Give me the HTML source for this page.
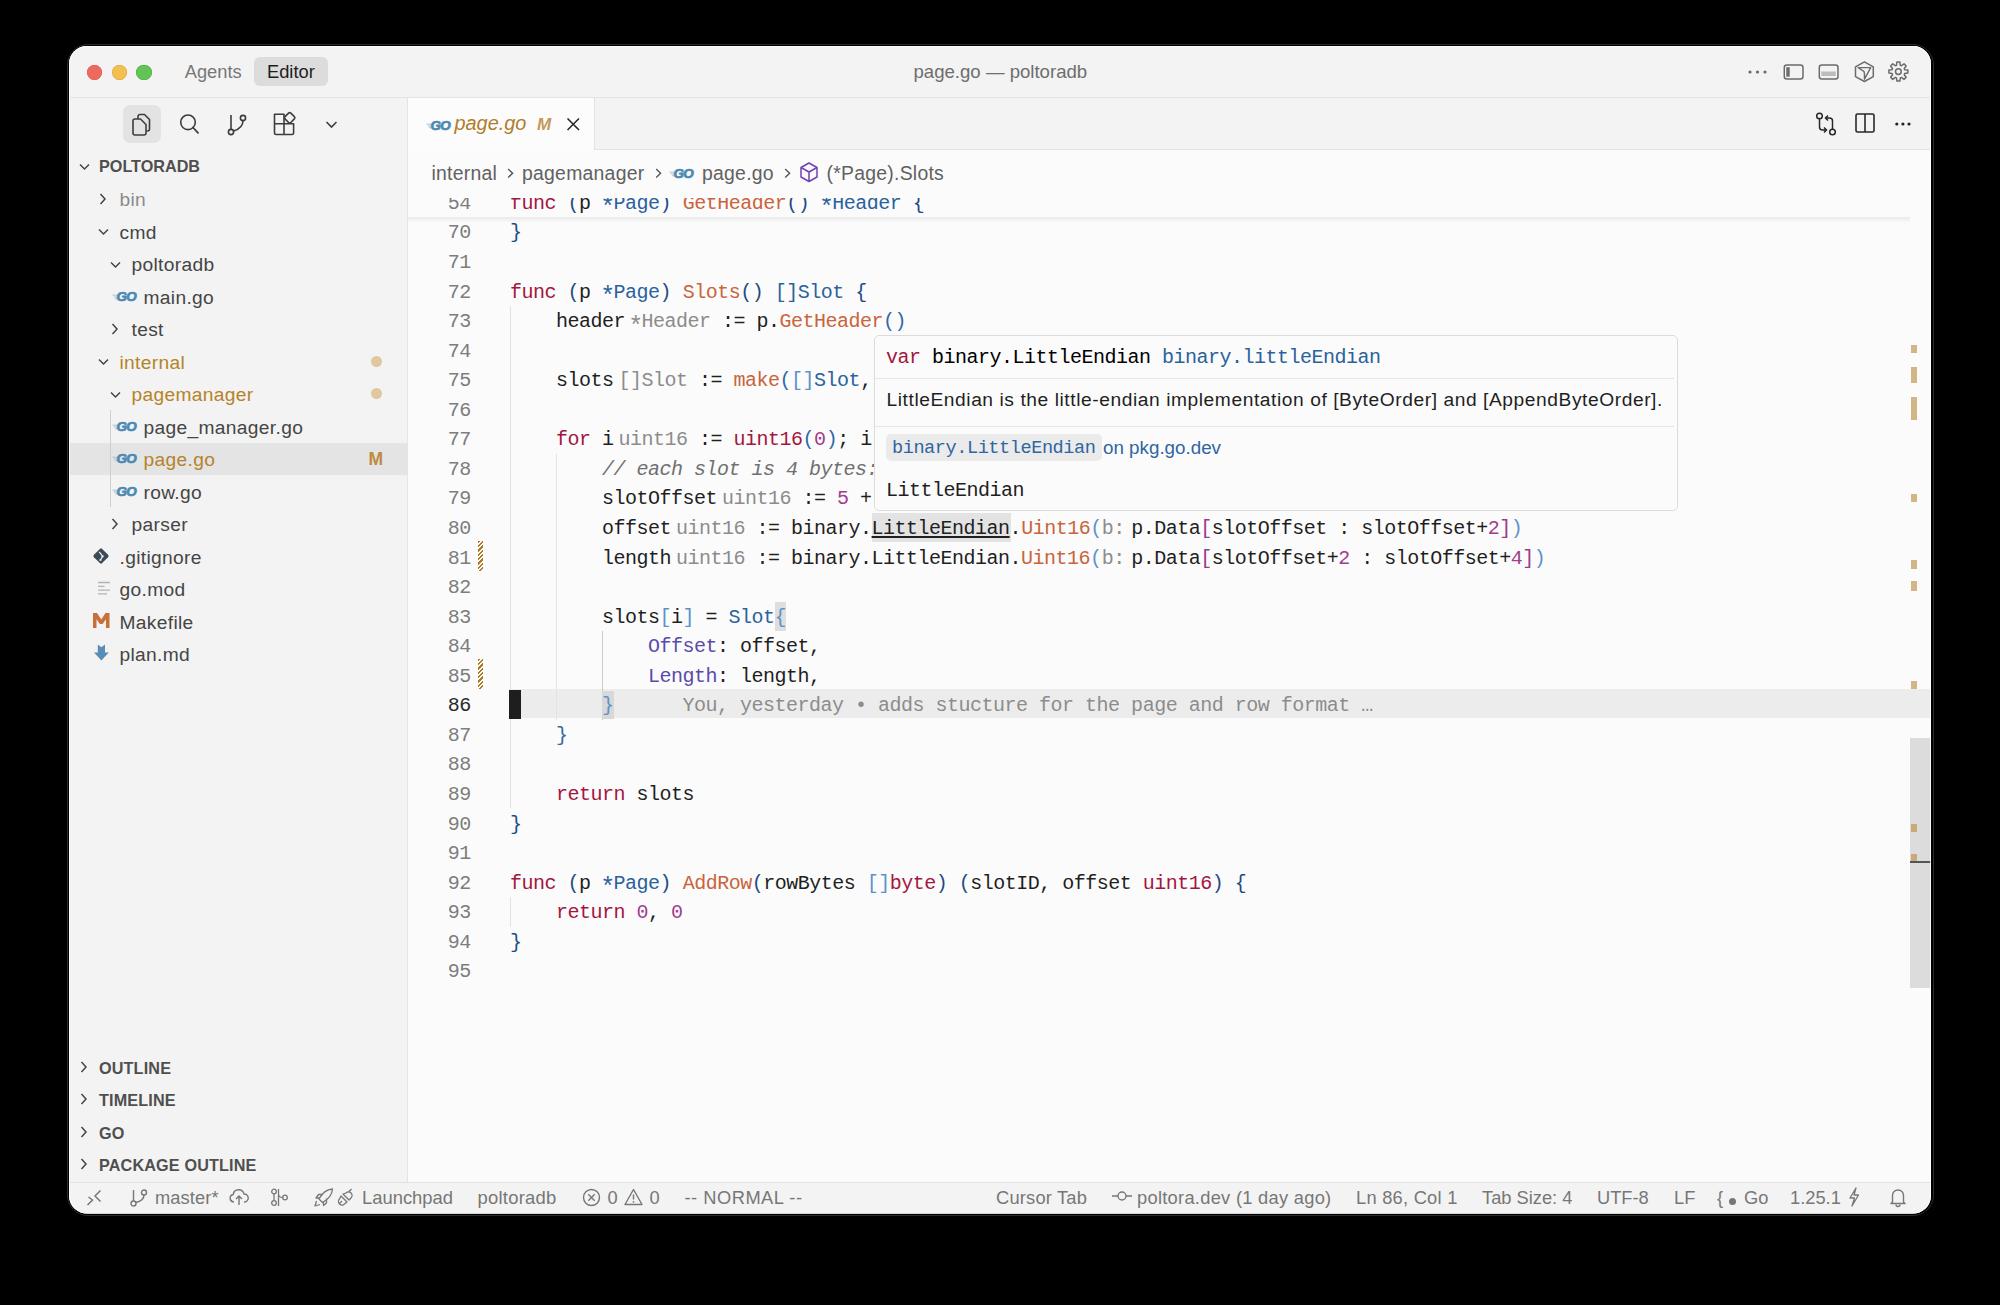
<!DOCTYPE html><html><head><meta charset="utf-8"><style>
*{margin:0;padding:0;box-sizing:border-box}
html,body{width:2000px;height:1305px;background:#000;overflow:hidden}
body{font-family:"Liberation Sans",sans-serif;position:relative}
#win{position:absolute;left:0;top:0;width:2000px;height:1305px;clip-path:inset(46px 69px 91.5px 69px round 18px);background:#f3f3f3}
.b{position:absolute}
.t{position:absolute;white-space:pre;line-height:1}
.m{font-family:"Liberation Mono",monospace}
svg{position:absolute;overflow:visible}
.code{position:absolute;white-space:pre;line-height:1;font-family:"Liberation Mono",monospace;font-size:20px;letter-spacing:-0.5px}
.code span{display:inline-block}
</style></head><body><div class="b" style="left:66.5px;top:44px;width:1867px;height:1172px;border:1px solid #2c2c2c;border-radius:21px"></div><div id="win"><div class="b" style="left:69px;top:46px;width:1862px;height:51px;background:#f3f3f3"></div><div class="b" style="left:69px;top:97px;width:1862px;height:1px;background:#e4e4e4"></div><div class="b" style="left:69px;top:98px;width:338px;height:1084px;background:#f3f3f3"></div><div class="b" style="left:407px;top:98px;width:1px;height:1084px;background:#e4e4e4"></div><div class="b" style="left:408px;top:98px;width:1523px;height:1084px;background:#fbfbfb"></div><div class="b" style="left:408px;top:98px;width:1523px;height:51px;background:#f3f3f3"></div><div class="b" style="left:408px;top:149px;width:1523px;height:1px;background:#e4e4e4"></div><div class="b" style="left:408px;top:98px;width:186px;height:52px;background:#fcfcfc"></div><div class="b" style="left:594px;top:98px;width:1px;height:51px;background:#e4e4e4"></div><div class="b" style="left:69px;top:1182px;width:1862px;height:1px;background:#e2e2e2"></div><div class="b" style="left:69px;top:1183px;width:1862px;height:31px;background:#f3f3f3"></div><div class="b" style="left:87.2px;top:64.9px;width:15.2px;height:15.2px;border-radius:50%;background:#ee6a5f;box-shadow:inset 0 0 0 0.5px #d65a50"></div><div class="b" style="left:111.7px;top:64.9px;width:15.2px;height:15.2px;border-radius:50%;background:#f5bf4f;box-shadow:inset 0 0 0 0.5px #d9a53c"></div><div class="b" style="left:136.4px;top:64.9px;width:15.2px;height:15.2px;border-radius:50%;background:#61c454;box-shadow:inset 0 0 0 0.5px #4fa842"></div><div class="t" style="left:184.70px;top:62.74px;font-size:18.3px;color:#777777;">Agents</div><div class="b" style="left:254px;top:57px;width:74px;height:29px;background:#dcdcdc;border-radius:6px"></div><div class="t" style="left:267.00px;top:62.74px;font-size:18.3px;color:#1e1e1e;">Editor</div><div class="t" style="left:913.50px;top:62.69px;font-size:18.6px;color:#6e6e6e;">page.go — poltoradb</div><svg style="left:1748px;top:68px;" width="22" height="8" viewBox="0 0 22 8"><circle cx="2.0" cy="4" r="1.6" fill="#6b6b6b"/><circle cx="9.5" cy="4" r="1.6" fill="#6b6b6b"/><circle cx="17.0" cy="4" r="1.6" fill="#6b6b6b"/></svg><svg style="left:1783px;top:63px;" width="22" height="18" viewBox="0 0 22 18"><rect x="1.3" y="2" width="18.7" height="14" rx="2.5" fill="none" stroke="#6b6b6b" stroke-width="1.5"/><rect x="3.3" y="4.2" width="3.4" height="9.5" fill="#6b6b6b"/></svg><svg style="left:1818px;top:63px;" width="22" height="18" viewBox="0 0 22 18"><rect x="1.3" y="2" width="18.7" height="14" rx="2.5" fill="none" stroke="#6b6b6b" stroke-width="1.5"/><rect x="3.3" y="8.5" width="14.5" height="4.5" fill="#bcbcbc"/></svg><svg style="left:1853px;top:61px;" width="22" height="22" viewBox="0 0 22 22"><path d="M11.4 0.8 L20.3 5.8 L20.3 15.6 L11.4 20.5 L2.5 15.6 L2.5 5.8 Z" fill="none" stroke="#6b6b6b" stroke-width="1.5" stroke-linejoin="round"/><path d="M5.2 6.6 L17.7 6.6 L11.5 18.2 L11.4 12 Q11.4 10.6 10.2 10 Z" fill="none" stroke="#6b6b6b" stroke-width="1.4" stroke-linejoin="round"/></svg><svg style="left:1888px;top:62px;" width="21" height="21" viewBox="0 0 21 21"><path d="M19.88 8.10 L19.88 11.10 L16.71 11.53 L16.23 12.70 L18.17 15.24 L16.04 17.37 L13.50 15.43 L12.33 15.91 L11.90 19.08 L8.90 19.08 L8.47 15.91 L7.30 15.43 L4.76 17.37 L2.63 15.24 L4.57 12.70 L4.09 11.53 L0.92 11.10 L0.92 8.10 L4.09 7.67 L4.57 6.50 L2.63 3.96 L4.76 1.83 L7.30 3.77 L8.47 3.29 L8.90 0.12 L11.90 0.12 L12.33 3.29 L13.50 3.77 L16.04 1.83 L18.17 3.96 L16.23 6.50 L16.71 7.67Z" fill="none" stroke="#6b6b6b" stroke-width="1.5" stroke-linejoin="round"/><circle cx="10.4" cy="9.6" r="2.9" fill="none" stroke="#6b6b6b" stroke-width="1.5"/></svg><div class="b" style="left:123px;top:105px;width:38px;height:38px;background:#e3e3e3;border-radius:7px"></div><svg style="left:131px;top:111px;" width="22" height="26" viewBox="0 0 22 26"><path d="M9 3.5 h4.5 l5 5 v9.5 a2 2 0 0 1 -2 2 h-1" fill="none" stroke="#3d3d3d" stroke-width="1.6" stroke-linejoin="round"/><path d="M9 3.5 a2 2 0 0 0 -2 2 v2.5" fill="none" stroke="#3d3d3d" stroke-width="1.6"/><path d="M4 8 h5.5 l5.5 5.5 v8.5 a2 2 0 0 1 -2 2 h-9 a2 2 0 0 1 -2 -2 v-12 a2 2 0 0 1 2 -2z" fill="none" stroke="#3d3d3d" stroke-width="1.6" stroke-linejoin="round"/></svg><svg style="left:179px;top:114px;" width="22" height="22" viewBox="0 0 22 22"><circle cx="9" cy="8.3" r="7.3" fill="none" stroke="#3d3d3d" stroke-width="1.6"/><path d="M14 13.5 L19 18.8" stroke="#3d3d3d" stroke-width="1.8" stroke-linecap="round"/></svg><svg style="left:226px;top:113px;" width="22" height="23" viewBox="0 0 22 23"><path d="M5 2 V17" stroke="#3d3d3d" stroke-width="1.6"/><circle cx="5" cy="19" r="2.6" fill="none" stroke="#3d3d3d" stroke-width="1.6"/><circle cx="17" cy="5" r="2.6" fill="none" stroke="#3d3d3d" stroke-width="1.6"/><path d="M17 7.6 C17 13 13 16.5 7.6 18" fill="none" stroke="#3d3d3d" stroke-width="1.6"/></svg><svg style="left:273px;top:111px;" width="24" height="25" viewBox="0 0 24 25"><path d="M1.5 3.2 h9.5 v9.6 h9.6 v9.2 a1.5 1.5 0 0 1 -1.5 1.5 h-16.1 a1.5 1.5 0 0 1 -1.5 -1.5 z M11 12.8 v10.7 M1.5 12.8 h9.5" fill="none" stroke="#3d3d3d" stroke-width="1.6" stroke-linejoin="round"/><rect x="12.6" y="2.7" width="8.2" height="8.2" rx="1.6" transform="rotate(45 16.7 6.8)" fill="none" stroke="#3d3d3d" stroke-width="1.6"/></svg><svg style="left:325px;top:120px;" width="14" height="10" viewBox="0 0 14 10"><path d="M1.5 2 L6.5 7 L11.5 2" fill="none" stroke="#3d3d3d" stroke-width="1.6"/></svg><div class="t" style="left:99.00px;top:158.33px;font-size:16.2px;color:#4f4f4f;font-weight:bold">POLTORADB</div><svg style="left:79px;top:163px;" width="12" height="8" viewBox="0 0 12 8"><path d="M1 1.5 L5.5 6 L10 1.5" fill="none" stroke="#444" stroke-width="1.5"/></svg><div class="b" style="left:69px;top:442.5px;width:338px;height:32.5px;background:#e4e4e4"></div><div class="b" style="left:110px;top:410px;width:1px;height:97px;background:#cfcfcf"></div><div class="t" style="left:119.50px;top:190.08px;font-size:19.2px;color:#8a8a8a;letter-spacing:0.33px">bin</div><svg style="left:99.0px;top:192.7px;" width="8" height="13" viewBox="0 0 8 13"><path d="M1.5 1 L6 6 L1.5 11" fill="none" stroke="#444" stroke-width="1.5"/></svg><div class="t" style="left:119.50px;top:222.58px;font-size:19.2px;color:#454545;letter-spacing:0.33px">cmd</div><svg style="left:97.5px;top:228.2px;" width="12" height="8" viewBox="0 0 12 8"><path d="M1 1.5 L5.5 6 L10 1.5" fill="none" stroke="#444" stroke-width="1.5"/></svg><div class="t" style="left:131.50px;top:255.08px;font-size:19.2px;color:#454545;letter-spacing:0.33px">poltoradb</div><svg style="left:109.5px;top:260.7px;" width="12" height="8" viewBox="0 0 12 8"><path d="M1 1.5 L5.5 6 L10 1.5" fill="none" stroke="#444" stroke-width="1.5"/></svg><div class="t" style="left:143.50px;top:287.58px;font-size:19.2px;color:#454545;letter-spacing:0.33px">main.go</div><svg style="left:111.5px;top:290.7px" width="27" height="11" viewBox="0 0 27 11"><path d="M0.5 4.2 h5 M1.8 6.0 h3.6 M3 7.8 h2.2" stroke="#9cc0d6" stroke-width="0.9"/><text x="4.6" y="10.2" font-family="Liberation Sans" font-weight="bold" font-style="italic" font-size="13.5" fill="#4c8ab3" stroke="#4c8ab3" stroke-width="0.7" letter-spacing="-0.9">GO</text></svg><div class="t" style="left:131.50px;top:320.08px;font-size:19.2px;color:#454545;letter-spacing:0.33px">test</div><svg style="left:111.0px;top:322.7px;" width="8" height="13" viewBox="0 0 8 13"><path d="M1.5 1 L6 6 L1.5 11" fill="none" stroke="#444" stroke-width="1.5"/></svg><div class="t" style="left:119.50px;top:352.58px;font-size:19.2px;color:#b5832b;letter-spacing:0.33px">internal</div><svg style="left:97.5px;top:358.2px;" width="12" height="8" viewBox="0 0 12 8"><path d="M1 1.5 L5.5 6 L10 1.5" fill="none" stroke="#444" stroke-width="1.5"/></svg><div class="t" style="left:131.50px;top:385.08px;font-size:19.2px;color:#b5832b;letter-spacing:0.33px">pagemanager</div><svg style="left:109.5px;top:390.7px;" width="12" height="8" viewBox="0 0 12 8"><path d="M1 1.5 L5.5 6 L10 1.5" fill="none" stroke="#444" stroke-width="1.5"/></svg><div class="t" style="left:143.50px;top:417.58px;font-size:19.2px;color:#454545;letter-spacing:0.33px">page_manager.go</div><svg style="left:111.5px;top:420.7px" width="27" height="11" viewBox="0 0 27 11"><path d="M0.5 4.2 h5 M1.8 6.0 h3.6 M3 7.8 h2.2" stroke="#9cc0d6" stroke-width="0.9"/><text x="4.6" y="10.2" font-family="Liberation Sans" font-weight="bold" font-style="italic" font-size="13.5" fill="#4c8ab3" stroke="#4c8ab3" stroke-width="0.7" letter-spacing="-0.9">GO</text></svg><div class="t" style="left:143.50px;top:450.08px;font-size:19.2px;color:#b5832b;letter-spacing:0.33px">page.go</div><svg style="left:111.5px;top:453.2px" width="27" height="11" viewBox="0 0 27 11"><path d="M0.5 4.2 h5 M1.8 6.0 h3.6 M3 7.8 h2.2" stroke="#9cc0d6" stroke-width="0.9"/><text x="4.6" y="10.2" font-family="Liberation Sans" font-weight="bold" font-style="italic" font-size="13.5" fill="#4c8ab3" stroke="#4c8ab3" stroke-width="0.7" letter-spacing="-0.9">GO</text></svg><div class="t" style="left:143.50px;top:482.58px;font-size:19.2px;color:#454545;letter-spacing:0.33px">row.go</div><svg style="left:111.5px;top:485.7px" width="27" height="11" viewBox="0 0 27 11"><path d="M0.5 4.2 h5 M1.8 6.0 h3.6 M3 7.8 h2.2" stroke="#9cc0d6" stroke-width="0.9"/><text x="4.6" y="10.2" font-family="Liberation Sans" font-weight="bold" font-style="italic" font-size="13.5" fill="#4c8ab3" stroke="#4c8ab3" stroke-width="0.7" letter-spacing="-0.9">GO</text></svg><div class="t" style="left:131.50px;top:515.08px;font-size:19.2px;color:#454545;letter-spacing:0.33px">parser</div><svg style="left:111.0px;top:517.7px;" width="8" height="13" viewBox="0 0 8 13"><path d="M1.5 1 L6 6 L1.5 11" fill="none" stroke="#444" stroke-width="1.5"/></svg><div class="t" style="left:119.50px;top:547.58px;font-size:19.2px;color:#454545;letter-spacing:0.33px">.gitignore</div><svg style="left:92px;top:547.2px;" width="18" height="18" viewBox="0 0 18 18"><rect x="3.2" y="3.2" width="11.6" height="11.6" rx="1.6" transform="rotate(45 9 9)" fill="#3b4a56"/><path d="M7.2 4.8 L10.6 9.2 M10.6 9.2 L8.6 12.8 M10.6 9.2 V9.2" fill="none" stroke="#f3f3f3" stroke-width="1.2"/><circle cx="10.6" cy="9.4" r="1.1" fill="#f3f3f3"/><circle cx="8.4" cy="13" r="1.1" fill="#f3f3f3"/></svg><div class="t" style="left:119.50px;top:580.08px;font-size:19.2px;color:#454545;letter-spacing:0.33px">go.mod</div><svg style="left:97px;top:581.2px;" width="14" height="14" viewBox="0 0 14 14"><path d="M1 1.5 h12 M1 5.3 h6.5 M1 9.1 h12 M1 12.9 h9" stroke="#b4b4b4" stroke-width="1.3"/></svg><div class="t" style="left:119.50px;top:612.58px;font-size:19.2px;color:#454545;letter-spacing:0.33px">Makefile</div><svg style="left:93px;top:612.7px;" width="17" height="16" viewBox="0 0 17 16"><path d="M0 15 V0 H4 L8.25 6.5 L12.5 0 H16.5 V15 H13 V6.2 L9.6 11 H6.9 L3.5 6.2 V15 Z" fill="#c8703a"/></svg><div class="t" style="left:119.50px;top:645.08px;font-size:19.2px;color:#454545;letter-spacing:0.33px">plan.md</div><svg style="left:93.5px;top:644.2px;" width="16" height="18" viewBox="0 0 16 18"><path d="M3.8 0.5 L7.4 3.2 L11 0.5 V8.5 H14.8 L7.4 16.5 L0 8.5 H3.8 Z" fill="#5a8db5"/></svg><div class="b" style="left:370.5px;top:355.7px;width:11px;height:11px;border-radius:50%;background:#dfc79f"></div><div class="b" style="left:370.5px;top:388.2px;width:11px;height:11px;border-radius:50%;background:#dfc79f"></div><div class="t" style="left:368.50px;top:451.12px;font-size:17.5px;color:#bb8b3e;font-weight:bold">M</div><div class="t" style="left:99.00px;top:1059.53px;font-size:16.2px;color:#4f4f4f;font-weight:bold;letter-spacing:0.15px">OUTLINE</div><svg style="left:80px;top:1060.8px;" width="8" height="13" viewBox="0 0 8 13"><path d="M1.5 1 L6 6 L1.5 11" fill="none" stroke="#444" stroke-width="1.5"/></svg><div class="t" style="left:99.00px;top:1092.03px;font-size:16.2px;color:#4f4f4f;font-weight:bold;letter-spacing:0.15px">TIMELINE</div><svg style="left:80px;top:1093.3px;" width="8" height="13" viewBox="0 0 8 13"><path d="M1.5 1 L6 6 L1.5 11" fill="none" stroke="#444" stroke-width="1.5"/></svg><div class="t" style="left:99.00px;top:1124.53px;font-size:16.2px;color:#4f4f4f;font-weight:bold;letter-spacing:0.15px">GO</div><svg style="left:80px;top:1125.8px;" width="8" height="13" viewBox="0 0 8 13"><path d="M1.5 1 L6 6 L1.5 11" fill="none" stroke="#444" stroke-width="1.5"/></svg><div class="t" style="left:99.00px;top:1157.03px;font-size:16.2px;color:#4f4f4f;font-weight:bold;letter-spacing:0.15px">PACKAGE OUTLINE</div><svg style="left:80px;top:1158.3px;" width="8" height="13" viewBox="0 0 8 13"><path d="M1.5 1 L6 6 L1.5 11" fill="none" stroke="#444" stroke-width="1.5"/></svg><svg style="left:425.5px;top:119.5px" width="27" height="11" viewBox="0 0 27 11"><path d="M0.5 4.2 h5 M1.8 6.0 h3.6 M3 7.8 h2.2" stroke="#9cc0d6" stroke-width="0.9"/><text x="4.6" y="10.2" font-family="Liberation Sans" font-weight="bold" font-style="italic" font-size="13.5" fill="#4c8ab3" stroke="#4c8ab3" stroke-width="0.7" letter-spacing="-0.9">GO</text></svg><div class="t" style="left:454.50px;top:114.09px;font-size:19.9px;color:#b07b2a;font-style:italic">page.go</div><div class="t" style="left:537.00px;top:115.55px;font-size:17px;color:#c49a58;font-style:italic;font-weight:bold">M</div><svg style="left:565.7px;top:117px;" width="15" height="15" viewBox="0 0 15 15"><path d="M1.5 1.5 L13 13 M13 1.5 L1.5 13" stroke="#222" stroke-width="1.5"/></svg><svg style="left:1815px;top:112px;" width="24" height="25" viewBox="0 0 24 25"><circle cx="4.5" cy="4" r="2.8" fill="none" stroke="#282828" stroke-width="1.5"/><circle cx="17.5" cy="20" r="2.8" fill="none" stroke="#282828" stroke-width="1.5"/><path d="M4.5 7 V15 a3 3 0 0 0 3 3 h3.5 M9 15.5 l2.5 2.5 l-2.5 2.5" fill="none" stroke="#282828" stroke-width="1.5"/><path d="M17.5 17 V9 a3 3 0 0 0 -3 -3 h-3.5 M13 3.5 l-2.5 2.5 l2.5 2.5" fill="none" stroke="#282828" stroke-width="1.5"/></svg><svg style="left:1855px;top:113px;" width="20" height="20" viewBox="0 0 20 20"><rect x="1" y="1" width="18" height="18" rx="1.5" fill="none" stroke="#282828" stroke-width="1.6"/><path d="M10 1 V19" stroke="#282828" stroke-width="1.6"/></svg><svg style="left:1894px;top:121px;" width="22" height="6" viewBox="0 0 22 6"><circle cx="2.8" cy="3" r="1.6" fill="#222"/><circle cx="8.899999999999999" cy="3" r="1.6" fill="#222"/><circle cx="15.0" cy="3" r="1.6" fill="#222"/></svg><div class="t" style="left:431.50px;top:164.11px;font-size:19.4px;color:#616161;letter-spacing:0.25px">internal</div><svg style="left:506.5px;top:167.5px;" width="8" height="11" viewBox="0 0 8 11"><path d="M1.2 1 L5.6 5.2 L1.2 9.4" fill="none" stroke="#555" stroke-width="1.4"/></svg><div class="t" style="left:522.00px;top:164.11px;font-size:19.4px;color:#616161;letter-spacing:0.25px">pagemanager</div><svg style="left:654.5px;top:167.5px;" width="8" height="11" viewBox="0 0 8 11"><path d="M1.2 1 L5.6 5.2 L1.2 9.4" fill="none" stroke="#555" stroke-width="1.4"/></svg><svg style="left:669px;top:168px" width="27" height="11" viewBox="0 0 27 11"><path d="M0.5 4.2 h5 M1.8 6.0 h3.6 M3 7.8 h2.2" stroke="#9cc0d6" stroke-width="0.9"/><text x="4.6" y="10.2" font-family="Liberation Sans" font-weight="bold" font-style="italic" font-size="13.5" fill="#4c8ab3" stroke="#4c8ab3" stroke-width="0.7" letter-spacing="-0.9">GO</text></svg><div class="t" style="left:702.00px;top:164.11px;font-size:19.4px;color:#616161;letter-spacing:0.25px">page.go</div><svg style="left:783.5px;top:167.5px;" width="8" height="11" viewBox="0 0 8 11"><path d="M1.2 1 L5.6 5.2 L1.2 9.4" fill="none" stroke="#555" stroke-width="1.4"/></svg><svg style="left:800px;top:162px;" width="18" height="21" viewBox="0 0 18 21"><path d="M9 1 L17 5.5 V15 L9 19.5 L1 15 V5.5 Z M1 5.5 L9 10 L17 5.5 M9 10 V19.5" fill="none" stroke="#7041b5" stroke-width="1.5" stroke-linejoin="round"/></svg><div class="t" style="left:826.50px;top:164.11px;font-size:19.4px;color:#616161;letter-spacing:0.25px">(*Page).Slots</div><div class="b" style="left:509px;top:689.06px;width:1422px;height:29.2px;background:#ececec"></div><div class="b" style="left:510px;top:305.98px;width:1px;height:502.52px;background:#e3e3e3"></div><div class="b" style="left:556px;top:453.78px;width:1px;height:266.03999999999996px;background:#e3e3e3"></div><div class="b" style="left:602px;top:631.14px;width:1px;height:59.12px;background:#cbcbcb"></div><div class="b" style="left:602px;top:690.26px;width:1px;height:29.56px;background:#cbcbcb"></div><div class="b" style="left:510px;top:897.1800000000001px;width:1px;height:29.56px;background:#e3e3e3"></div><div class="b" style="left:774.5px;top:602.0799999999999px;width:11.5px;height:28.5px;background:#dedede"></div><div class="b" style="left:602.0px;top:690.76px;width:11.5px;height:28.5px;background:#d8d8d8"></div><div class="b" style="left:871.8px;top:513.4px;width:139.0px;height:28.5px;background:#e3e3e3"></div><div class="code" style="left:447.7px;top:223.40px;color:#7d7d7d">70</div><div class="code" style="left:510.0px;top:223.40px"><span style="color:#1d4b84;">}</span></div><div class="code" style="left:447.7px;top:252.96px;color:#7d7d7d">71</div><div class="code" style="left:447.7px;top:282.52px;color:#7d7d7d">72</div><div class="code" style="left:510.0px;top:282.52px"><span style="color:#a3173f;">func</span><span style="color:#1f1f1f;"> </span><span style="color:#1d4b84;">(</span><span style="color:#1f1f1f;">p </span><span style="color:#2a629c;position:relative;top:5.5px;left:-1.8px;font-size:25px;letter-spacing:-3.5px;line-height:20px;vertical-align:top">*</span><span style="color:#2a629c;">Page</span><span style="color:#1d4b84;">)</span><span style="color:#1f1f1f;"> </span><span style="color:#c9643c;">Slots</span><span style="color:#1d4b84;">()</span><span style="color:#1f1f1f;"> </span><span style="color:#2a629c;">[]Slot</span><span style="color:#1f1f1f;"> </span><span style="color:#1d4b84;">{</span></div><div class="code" style="left:447.7px;top:312.08px;color:#7d7d7d">73</div><div class="code" style="left:510.0px;top:312.08px"><span style="color:#1f1f1f;">    header</span><span style="color:#8c8c8c;padding-left:5px;position:relative;top:5.5px;left:-1.8px;font-size:25px;letter-spacing:-3.5px;line-height:20px;vertical-align:top">*</span><span style="color:#8c8c8c;">Header</span><span style="color:#1f1f1f;"> := p.</span><span style="color:#c9643c;">GetHeader</span><span style="color:#2e69a3;">()</span></div><div class="code" style="left:447.7px;top:341.64px;color:#7d7d7d">74</div><div class="code" style="left:447.7px;top:371.20px;color:#7d7d7d">75</div><div class="code" style="left:510.0px;top:371.20px"><span style="color:#1f1f1f;">    slots</span><span style="color:#8c8c8c;padding-left:5px;">[]Slot</span><span style="color:#1f1f1f;"> := </span><span style="color:#c9643c;">make</span><span style="color:#2e69a3;">(</span><span style="color:#5b93c9;">[]</span><span style="color:#2a629c;">Slot</span><span style="color:#1f1f1f;">, </span><span style="color:#c9643c;">len</span></div><div class="code" style="left:447.7px;top:400.76px;color:#7d7d7d">76</div><div class="code" style="left:447.7px;top:430.32px;color:#7d7d7d">77</div><div class="code" style="left:510.0px;top:430.32px"><span style="color:#1f1f1f;">    </span><span style="color:#a3173f;">for</span><span style="color:#1f1f1f;"> i</span><span style="color:#8c8c8c;padding-left:5px;">uint16</span><span style="color:#1f1f1f;"> := </span><span style="color:#a3173f;">uint16</span><span style="color:#2e69a3;">(</span><span style="color:#a23d8e;">0</span><span style="color:#2e69a3;">)</span><span style="color:#1f1f1f;">; i &lt; </span></div><div class="code" style="left:447.7px;top:459.88px;color:#7d7d7d">78</div><div class="code" style="left:510.0px;top:459.88px"><span style="color:#1f1f1f;">        </span><span style="color:#707070;font-style:italic;">// each slot is 4 bytes: offset, length</span></div><div class="code" style="left:447.7px;top:489.44px;color:#7d7d7d">79</div><div class="code" style="left:510.0px;top:489.44px"><span style="color:#1f1f1f;">        slotOffset</span><span style="color:#8c8c8c;padding-left:5px;">uint16</span><span style="color:#1f1f1f;"> := </span><span style="color:#a23d8e;">5</span><span style="color:#1f1f1f;"> + i*4</span></div><div class="code" style="left:447.7px;top:519.00px;color:#7d7d7d">80</div><div class="code" style="left:510.0px;top:519.00px"><span style="color:#1f1f1f;">        offset</span><span style="color:#8c8c8c;padding-left:5px;">uint16</span><span style="color:#1f1f1f;"> := binary.</span><span style="color:#1f1f1f;text-decoration:underline;text-underline-offset:1.5px;text-decoration-thickness:1.6px;">LittleEndian</span><span style="color:#1f1f1f;">.</span><span style="color:#c9643c;">Uint16</span><span style="color:#5b93c9;">(</span><span style="color:#8c8c8c;padding-right:6.5px;">b:</span><span style="color:#1f1f1f;">p.Data</span><span style="color:#9a3a8a;">[</span><span style="color:#1f1f1f;">slotOffset : slotOffset+</span><span style="color:#a23d8e;">2</span><span style="color:#9a3a8a;">]</span><span style="color:#5b93c9;">)</span></div><div class="code" style="left:447.7px;top:548.56px;color:#7d7d7d">81</div><div class="code" style="left:510.0px;top:548.56px"><span style="color:#1f1f1f;">        length</span><span style="color:#8c8c8c;padding-left:5px;">uint16</span><span style="color:#1f1f1f;"> := binary.LittleEndian.</span><span style="color:#c9643c;">Uint16</span><span style="color:#5b93c9;">(</span><span style="color:#8c8c8c;padding-right:6.5px;">b:</span><span style="color:#1f1f1f;">p.Data</span><span style="color:#9a3a8a;">[</span><span style="color:#1f1f1f;">slotOffset+</span><span style="color:#a23d8e;">2</span><span style="color:#1f1f1f;"> : slotOffset+</span><span style="color:#a23d8e;">4</span><span style="color:#9a3a8a;">]</span><span style="color:#5b93c9;">)</span></div><div class="code" style="left:447.7px;top:578.12px;color:#7d7d7d">82</div><div class="code" style="left:447.7px;top:607.68px;color:#7d7d7d">83</div><div class="code" style="left:510.0px;top:607.68px"><span style="color:#1f1f1f;">        slots</span><span style="color:#5b93c9;">[</span><span style="color:#1f1f1f;">i</span><span style="color:#5b93c9;">]</span><span style="color:#1f1f1f;"> = </span><span style="color:#2a629c;">Slot</span><span style="color:#5b93c9;">{</span></div><div class="code" style="left:447.7px;top:637.24px;color:#7d7d7d">84</div><div class="code" style="left:510.0px;top:637.24px"><span style="color:#1f1f1f;">            </span><span style="color:#5a4bab;">Offset</span><span style="color:#1f1f1f;">: offset,</span></div><div class="code" style="left:447.7px;top:666.80px;color:#7d7d7d">85</div><div class="code" style="left:510.0px;top:666.80px"><span style="color:#1f1f1f;">            </span><span style="color:#5a4bab;">Length</span><span style="color:#1f1f1f;">: length,</span></div><div class="code" style="left:447.7px;top:696.36px;color:#2a2a2a">86</div><div class="code" style="left:510.0px;top:696.36px"><span style="color:#1f1f1f;">        </span><span style="color:#5b93c9;">}</span><span style="color:#1f1f1f;">      </span><span style="color:#8c8c8c;">You, yesterday • adds stucture for the page and row format …</span></div><div class="code" style="left:447.7px;top:725.92px;color:#7d7d7d">87</div><div class="code" style="left:510.0px;top:725.92px"><span style="color:#1f1f1f;">    </span><span style="color:#2e69a3;">}</span></div><div class="code" style="left:447.7px;top:755.48px;color:#7d7d7d">88</div><div class="code" style="left:447.7px;top:785.04px;color:#7d7d7d">89</div><div class="code" style="left:510.0px;top:785.04px"><span style="color:#1f1f1f;">    </span><span style="color:#a3173f;">return</span><span style="color:#1f1f1f;"> slots</span></div><div class="code" style="left:447.7px;top:814.60px;color:#7d7d7d">90</div><div class="code" style="left:510.0px;top:814.60px"><span style="color:#1d4b84;">}</span></div><div class="code" style="left:447.7px;top:844.16px;color:#7d7d7d">91</div><div class="code" style="left:447.7px;top:873.72px;color:#7d7d7d">92</div><div class="code" style="left:510.0px;top:873.72px"><span style="color:#a3173f;">func</span><span style="color:#1f1f1f;"> </span><span style="color:#1d4b84;">(</span><span style="color:#1f1f1f;">p </span><span style="color:#2a629c;position:relative;top:5.5px;left:-1.8px;font-size:25px;letter-spacing:-3.5px;line-height:20px;vertical-align:top">*</span><span style="color:#2a629c;">Page</span><span style="color:#1d4b84;">)</span><span style="color:#1f1f1f;"> </span><span style="color:#c9643c;">AddRow</span><span style="color:#1d4b84;">(</span><span style="color:#1f1f1f;">rowBytes </span><span style="color:#5b93c9;">[]</span><span style="color:#a3173f;">byte</span><span style="color:#1d4b84;">)</span><span style="color:#1f1f1f;"> </span><span style="color:#1d4b84;">(</span><span style="color:#1f1f1f;">slotID, offset </span><span style="color:#a3173f;">uint16</span><span style="color:#1d4b84;">)</span><span style="color:#1f1f1f;"> </span><span style="color:#1d4b84;">{</span></div><div class="code" style="left:447.7px;top:903.28px;color:#7d7d7d">93</div><div class="code" style="left:510.0px;top:903.28px"><span style="color:#1f1f1f;">    </span><span style="color:#a3173f;">return</span><span style="color:#1f1f1f;"> </span><span style="color:#a23d8e;">0</span><span style="color:#1f1f1f;">, </span><span style="color:#a23d8e;">0</span></div><div class="code" style="left:447.7px;top:932.84px;color:#7d7d7d">94</div><div class="code" style="left:510.0px;top:932.84px"><span style="color:#1d4b84;">}</span></div><div class="code" style="left:447.7px;top:962.40px;color:#7d7d7d">95</div><div class="b" style="left:509px;top:689.76px;width:12px;height:29.2px;background:#1e1e1e"></div><div class="b" style="left:478px;top:541.1600000000001px;width:5px;height:30px;background:repeating-linear-gradient(135deg,#b07a22 0 1.6px,transparent 1.6px 3.1px)"></div><div class="b" style="left:478px;top:659.4000000000001px;width:5px;height:30px;background:repeating-linear-gradient(135deg,#b07a22 0 1.6px,transparent 1.6px 3.1px)"></div><div class="b" style="left:408px;top:198px;width:1502px;height:20px;overflow:hidden;background:#fbfbfb"><div class="code" style="left:102.0px;top:-4.40px"><span style="color:#a3173f">func</span><span style="color:#1f1f1f"> </span><span style="color:#1d4b84">(</span><span style="color:#1f1f1f">p </span><span style="color:#2a629c"><span style="position:relative;top:5.5px;left:-1.8px;font-size:25px;letter-spacing:-3.5px;line-height:20px;vertical-align:top">*</span>Page</span><span style="color:#1d4b84">)</span><span style="color:#1f1f1f"> </span><span style="color:#c9643c">GetHeader</span><span style="color:#1d4b84">()</span><span style="color:#1f1f1f"> </span><span style="color:#2a629c"><span style="position:relative;top:5.5px;left:-1.8px;font-size:25px;letter-spacing:-3.5px;line-height:20px;vertical-align:top">*</span>Header</span><span style="color:#1f1f1f"> </span><span style="color:#1d4b84">{</span></div><div class="code" style="left:39.7px;top:-4.40px;color:#7d7d7d">54</div></div><div class="b" style="left:408px;top:217px;width:1502px;height:6px;background:linear-gradient(rgba(0,0,0,0.07),rgba(0,0,0,0))"></div><div class="b" style="left:1910px;top:738px;width:21px;height:250px;background:#dcdcdc"></div><div class="b" style="left:1911px;top:344.5px;width:6px;height:8.699999999999989px;background:#d3b686"></div><div class="b" style="left:1911px;top:367.2px;width:6px;height:15.600000000000023px;background:#d3b686"></div><div class="b" style="left:1911px;top:397.2px;width:6px;height:22.80000000000001px;background:#d3b686"></div><div class="b" style="left:1911px;top:493.5px;width:6px;height:8.600000000000023px;background:#d3b686"></div><div class="b" style="left:1911px;top:559.7px;width:6px;height:8.899999999999977px;background:#d3b686"></div><div class="b" style="left:1911px;top:581.4px;width:6px;height:9.300000000000068px;background:#d3b686"></div><div class="b" style="left:1911px;top:680.8px;width:6px;height:8.400000000000091px;background:#d3b686"></div><div class="b" style="left:1911px;top:823.6px;width:6px;height:8.399999999999977px;background:#c7aa78"></div><div class="b" style="left:1911px;top:854px;width:6px;height:8px;background:#c7aa78"></div><div class="b" style="left:1910px;top:860.5px;width:21px;height:2px;background:#555"></div><div class="b" style="left:873.5px;top:335px;width:804px;height:176px;background:#fbfbfb;border:1px solid #dcdcdc;border-radius:5px"></div><div class="b" style="left:875px;top:377.5px;width:799px;height:1px;background:#e6e6e6"></div><div class="b" style="left:875px;top:425.5px;width:799px;height:1px;background:#e6e6e6"></div><div class="code" style="left:886px;top:348.10px"><span style="color:#a3173f">var</span> binary.LittleEndian <span style="color:#2a629c">binary.littleEndian</span></div><div class="t" style="left:886.50px;top:389.68px;font-size:19.2px;color:#1f1f1f;letter-spacing:0.57px">LittleEndian is the little-endian implementation of [ByteOrder] and [AppendByteOrder].</div><div class="b" style="left:886px;top:434.3px;width:215.5px;height:27px;background:#ebebeb;border-radius:5px"></div><div class="t m" style="left:892px;top:440.16px;font-size:18.6px;letter-spacing:-0.45px;color:#2f66a0">binary.LittleEndian</div><div class="t" style="left:1103.00px;top:438.52px;font-size:18.8px;color:#2f66a0;">on pkg.go.dev</div><div class="code" style="left:886px;top:481.20px;color:#1f1f1f">LittleEndian</div><svg style="left:86px;top:1189px;" width="16" height="18" viewBox="0 0 16 18"><path d="M1.5 16 L6.5 11 L2.5 8 M14.5 1.5 L9 7 L14.5 12.5" fill="none" stroke="#777777" stroke-width="1.5"/></svg><svg style="left:130px;top:1189px;" width="18" height="18" viewBox="0 0 18 18"><circle cx="3.5" cy="14.5" r="2.5" fill="none" stroke="#777777" stroke-width="1.4"/><circle cx="14" cy="3.5" r="2.5" fill="none" stroke="#777777" stroke-width="1.4"/><path d="M3.5 12 V1 M14 6 C14 10 10 12.5 5.8 13.5" fill="none" stroke="#777777" stroke-width="1.4"/></svg><div class="t" style="left:155.00px;top:1189.44px;font-size:18.3px;color:#777777;letter-spacing:0.1px">master*</div><svg style="left:229px;top:1188px;" width="20" height="18" viewBox="0 0 20 18"><path d="M5 14 H4.5 A3.8 3.8 0 0 1 4.2 6.5 A5.5 5.5 0 0 1 15 6 A3.8 3.8 0 0 1 15.5 14 H15" fill="none" stroke="#777777" stroke-width="1.4"/><path d="M10 17 V8.5 M7 11 L10 8 L13 11" fill="none" stroke="#777777" stroke-width="1.4"/></svg><svg style="left:270px;top:1188px;" width="19" height="19" viewBox="0 0 19 19"><circle cx="4" cy="3.5" r="2.3" fill="none" stroke="#777777" stroke-width="1.3"/><circle cx="4" cy="15" r="2.3" fill="none" stroke="#777777" stroke-width="1.3"/><circle cx="15" cy="9.5" r="2.3" fill="none" stroke="#777777" stroke-width="1.3"/><path d="M4 6 V12.5 M8.5 1 V18 M12.7 9.5 C10 9.5 8.5 8 8.5 6" fill="none" stroke="#777777" stroke-width="1.3"/></svg><svg style="left:314px;top:1188px;" width="20" height="19" viewBox="0 0 20 19"><path d="M18.5 1 C12 1.5 8 5 5 11 L8.5 14.5 C14 11.5 18 7.5 18.5 1z M5.5 10 L2 10 L4.5 6.5 L9 6.5 M9.5 14 L9.5 17.5 L12.5 15 L12.5 10.5 M2.5 13 L1 18 L6 16.5" fill="none" stroke="#777777" stroke-width="1.3" stroke-linejoin="round"/></svg><svg style="left:336px;top:1188px;" width="18" height="19" viewBox="0 0 18 19"><path d="M3 16 L6 13 M12.5 4 L15.5 1 M5 8 L11 14 L8.5 16 a3.5 3.5 0 0 1 -5 -5z M7 6 L13 12 L15 10 a3.5 3.5 0 0 0 -5 -5z" fill="none" stroke="#777777" stroke-width="1.3" stroke-linejoin="round"/></svg><div class="t" style="left:362.00px;top:1189.36px;font-size:18.4px;color:#777777;">Launchpad</div><div class="t" style="left:477.50px;top:1189.36px;font-size:18.4px;color:#777777;letter-spacing:0.25px">poltoradb</div><svg style="left:582px;top:1188px;" width="19" height="19" viewBox="0 0 19 19"><circle cx="9.5" cy="9.5" r="8" fill="none" stroke="#777777" stroke-width="1.4"/><path d="M6.3 6.3 L12.7 12.7 M12.7 6.3 L6.3 12.7" stroke="#777777" stroke-width="1.4"/></svg><div class="t" style="left:607.50px;top:1189.44px;font-size:18.3px;color:#777777;">0</div><svg style="left:624px;top:1188px;" width="19" height="18" viewBox="0 0 19 18"><path d="M9.5 1.5 L18 16.5 H1 Z" fill="none" stroke="#777777" stroke-width="1.4" stroke-linejoin="round"/><path d="M9.5 6.5 V11.5" stroke="#777777" stroke-width="1.4"/><circle cx="9.5" cy="13.8" r="0.9" fill="#777777"/></svg><div class="t" style="left:649.50px;top:1189.44px;font-size:18.3px;color:#777777;">0</div><div class="t" style="left:684.50px;top:1189.44px;font-size:18.3px;color:#777777;letter-spacing:0.5px">-- NORMAL --</div><div class="t" style="left:996.00px;top:1189.44px;font-size:18.3px;color:#777777;letter-spacing:0.2px">Cursor Tab</div><svg style="left:1112px;top:1190px;" width="20" height="12" viewBox="0 0 20 12"><path d="M0 6 H6 M14 6 H20" stroke="#777777" stroke-width="1.4"/><circle cx="10" cy="6" r="4" fill="none" stroke="#777777" stroke-width="1.4"/></svg><div class="t" style="left:1137.00px;top:1189.44px;font-size:18.3px;color:#777777;letter-spacing:0.28px">poltora.dev (1 day ago)</div><div class="t" style="left:1356.00px;top:1189.44px;font-size:18.3px;color:#777777;letter-spacing:0.25px">Ln 86, Col 1</div><div class="t" style="left:1482.00px;top:1189.44px;font-size:18.3px;color:#777777;">Tab Size: 4</div><div class="t" style="left:1597.00px;top:1189.44px;font-size:18.3px;color:#777777;">UTF-8</div><div class="t" style="left:1674.00px;top:1189.44px;font-size:18.3px;color:#777777;">LF</div><div class="t" style="left:1717.00px;top:1189.44px;font-size:18.3px;color:#777777;">{</div><div class="b" style="left:1728.5px;top:1198px;width:7px;height:7px;border-radius:50%;background:#777777"></div><div class="t" style="left:1744.00px;top:1189.44px;font-size:18.3px;color:#777777;">Go</div><div class="t" style="left:1790.00px;top:1189.44px;font-size:18.3px;color:#777777;">1.25.1</div><svg style="left:1848px;top:1187px;" width="12" height="20" viewBox="0 0 12 20"><path d="M8 1 L2 11 H6.5 L4 19 L10.5 8 H6 Z" fill="none" stroke="#777777" stroke-width="1.3" stroke-linejoin="round"/></svg><svg style="left:1889px;top:1188px;" width="18" height="19" viewBox="0 0 18 19"><path d="M3.5 14 V7.5 a5.5 5.5 0 0 1 11 0 V14 l1.5 1.5 H2z" fill="none" stroke="#777777" stroke-width="1.4" stroke-linejoin="round"/><path d="M7 16.5 a2 2 0 0 0 4 0" fill="none" stroke="#777777" stroke-width="1.4"/></svg><div class="b" style="left:69px;top:46px;width:1862px;height:1167.5px;border-radius:18px;box-shadow:inset 0 0 0 1px rgba(255,255,255,0.8)"></div></div></body></html>
